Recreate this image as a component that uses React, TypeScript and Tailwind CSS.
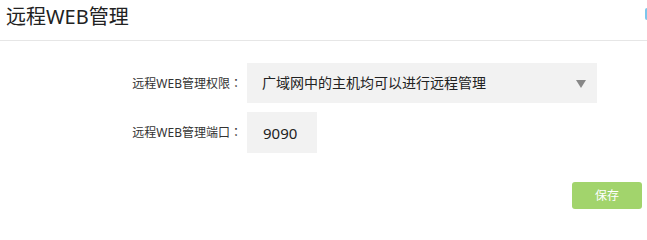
import React from "react";

const font = {
  fontFamily: '"Noto Sans", "Noto Sans CJK SC", sans-serif',
};

function Colon() {
  return <span className="font-['Noto_Sans_CJK_TC',sans-serif]">：</span>;
}

export default function App() {
  return (
    <div
      className="relative w-[647px] h-[216px] bg-white text-[#333] overflow-hidden"
      style={font}
    >
      <div className="h-[41px] border-b border-[#e6e6e6] pl-[6px] pt-[3px]">
        <h1 className="text-[20px] leading-[28px] text-[#222] font-normal">远程WEB管理</h1>
      </div>
      <div className="absolute right-0 top-[8px] w-[2px] h-[12px] bg-[#7cc6ec] rounded-l-sm" />

      <div className="flex flex-col gap-[9px] pt-[22px] pl-[122px]">
        <div className="flex items-center h-[40px]">
          <label className="w-[120px] text-right text-[12px] leading-[16px] mr-[5px] whitespace-nowrap">
            远程WEB管理权限<Colon />
          </label>
          <div className="flex items-center justify-between w-[350px] h-[40px] bg-[#f2f2f2] pl-[15px] pr-[11px]">
            <span className="text-[14px] leading-[20px] text-[#222]">广域网中的主机均可以进行远程管理</span>
            <svg width="10" height="8" viewBox="0 0 10 8" className="mt-[1px]">
              <polygon points="0,0 10,0 5,8" fill="#888" />
            </svg>
          </div>
        </div>
        <div className="flex items-center h-[41px]">
          <label className="w-[120px] text-right text-[12px] leading-[16px] mr-[5px] whitespace-nowrap">
            远程WEB管理端口<Colon />
          </label>
          <div className="flex items-center w-[70px] h-[41px] bg-[#f2f2f2] pl-[16px]">
            <span className="text-[15px] leading-[20px] text-[#222]">9090</span>
          </div>
        </div>
      </div>

      <div className="flex justify-end pr-[5px] pt-[29px]">
        <button className="w-[70px] h-[27px] rounded-[3px] bg-[#a2d46c] text-white text-[12px] leading-[16px]">
          保存
        </button>
      </div>
    </div>
  );
}
